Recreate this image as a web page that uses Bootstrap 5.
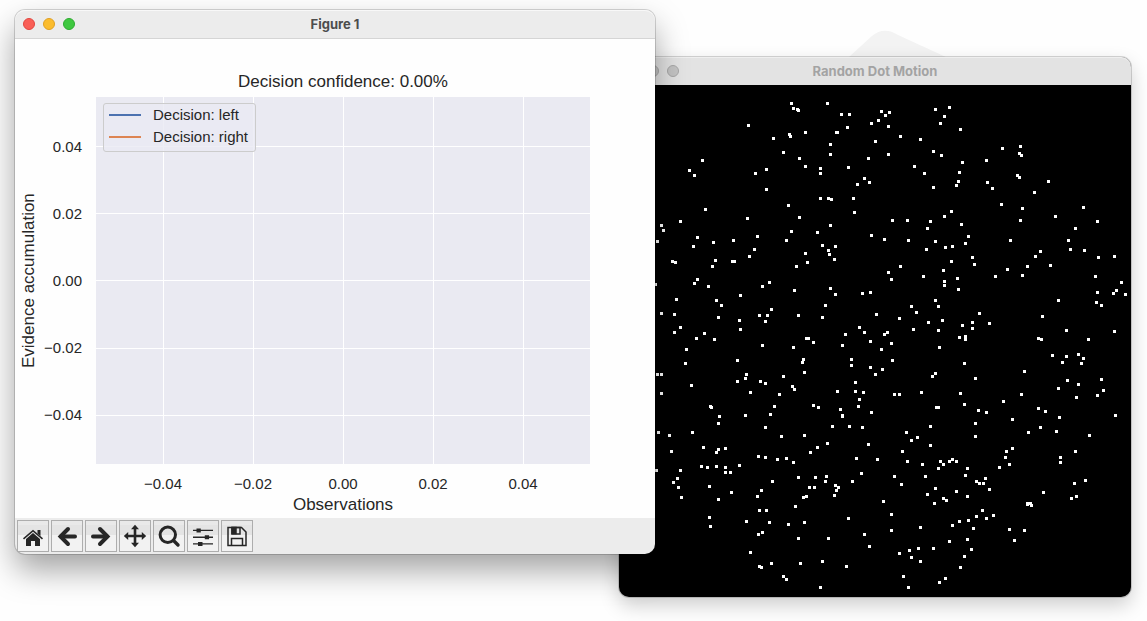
<!DOCTYPE html>
<html lang="en">
<head>
<meta charset="utf-8">
<meta name="viewport" content="width=device-width, initial-scale=1">
<title>Random Dot Motion</title>
<link href="https://cdn.jsdelivr.net/npm/bootstrap@5.3.0/dist/css/bootstrap.min.css" rel="stylesheet">
<style>
  body { background: #fefefe; font-family: "Liberation Sans", Arial, sans-serif; color: #262626; }
  .desktop { min-height: 100vh; }
  .app-window { position: absolute; border-radius: 10px; }
  .figure-window { left: 15px; top: 10px; width: 640px; z-index: 2; background: #ececec;
    box-shadow: 0 0 0 1px rgba(0,0,0,.16), 0 16px 32px rgba(0,0,0,.36); }
  .motion-window { left: 619px; top: 57px; width: 512px; z-index: 1; background: #000;
    box-shadow: 0 0 0 1px rgba(0,0,0,.16), 0 8px 20px rgba(0,0,0,.2); }
  .peak { position: absolute; left: 846px; top: 29px; }
  .title-bar { height: 29px; background: #ececec; border-bottom: 1px solid #d5d5d5; border-radius: 10px 10px 0 0;
    padding: 0 8px; display: grid; grid-template-columns: 1fr auto 1fr; align-items: center;
    box-shadow: inset 0 1px 0 #f8f8f8; }
  .title-bar h1 { font: 700 13px/16px Inter, sans-serif; margin: 0; color: #4d4d4d; }
  .motion-window .title-bar { height: 28px; background: #e3e3e3; border-bottom: 0; box-shadow: inset 0 1px 0 #efefef; }
  .motion-window h1 { color: #a3a3a3; }
  .light { width: 12px; height: 12px; border: 1px solid; border-radius: 50%; padding: 0; }
  .light-close { background: #f95f57; border-color: #e2463f; }
  .light-min { background: #fbbc2e; border-color: #e0a023; }
  .light-max { background: #3fc840; border-color: #2eab30; }
  .light-off { background: #c4c4c4; border-color: #a8a8a8; }
  .figure-body { background: #fefefe; padding: 32px 65px 3px 4px; display: grid;
    grid-template-columns: 20px 57px 1fr; grid-template-rows: 26px 367px auto auto; }
  .fig-label { font-size: 17px; line-height: 21px; text-align: center; }
  .y-title { writing-mode: vertical-rl; transform: rotate(180deg); line-height: 20px; }
  .ticks { font-size: 15px; line-height: 20px; }
  .y-ticks { padding: 16px 14px 16px 0; }
  .y-ticks span, .x-ticks span { flex: 1 1 0; }
  .x-ticks { padding: 10px 22px 0; text-align: center; }
  .axes { background: #eaeaf2; position: relative; }
  .gridlines { width: 100%; height: 100%; }
  .legend-box { position: absolute; left: 7px; top: 6px; border: 1px solid #ccc; border-radius: 3px;
    background: rgba(234,234,242,.8); padding: 0 7px 3px 5px; font-size: 15px; line-height: 22px; }
  .legend-line { width: 32px; height: 2px; margin-right: 12px; }
  .line-left { background: #4c72b0; }
  .line-right { background: #dd8452; }
  .tool-bar { padding: 2px; gap: 2px; border-radius: 0 0 10px 10px; }
  .tool { width: 32px; height: 32px; padding: 0; border: 1px solid #adadad; color: #262626;
    background: linear-gradient(#e9e9e9 0 4px, #e4e4e4 4px 14px, #f2f2f2 14px); }
  .tool svg { display: block; margin: auto; }
  .dot-field { display: block; width: 100%; height: auto; border-radius: 0 0 10px 10px; }
</style>
</head>
<body>
<main class="desktop position-relative overflow-hidden">
  <svg class="peak" width="100" height="28" aria-hidden="true"><path d="M3 28L26 7Q38-3 52 6L100 28Z" fill="#f3f3f3"/></svg>

  <section class="app-window motion-window" aria-label="Random Dot Motion">
    <header class="title-bar">
      <div class="d-flex gap-2">
        <button class="light light-off" aria-label="Close"></button>
        <button class="light light-off" aria-label="Minimise"></button>
        <button class="light light-off" aria-label="Zoom"></button>
      </div>
      <h1>Random Dot Motion</h1>
    </header>
    <svg class="dot-field" viewBox="0 0 512 512" shape-rendering="crispEdges" role="img" aria-label="Moving dots"><path id="dots" fill="#fff"/></svg>
  </section>

  <section class="app-window figure-window" aria-label="Figure 1">
    <header class="title-bar">
      <div class="d-flex gap-2">
        <button class="light light-close" aria-label="Close"></button>
        <button class="light light-min" aria-label="Minimise"></button>
        <button class="light light-max" aria-label="Zoom"></button>
      </div>
      <h1>Figure 1</h1>
    </header>
    <div class="figure-body">
      <div></div><div></div>
      <div class="fig-label">Decision confidence: 0.00%</div>
      <div class="fig-label y-title">Evidence accumulation</div>
      <div class="ticks y-ticks d-flex flex-column text-end">
        <span class="d-flex align-items-center justify-content-end">0.04</span>
        <span class="d-flex align-items-center justify-content-end">0.02</span>
        <span class="d-flex align-items-center justify-content-end">0.00</span>
        <span class="d-flex align-items-center justify-content-end">−0.02</span>
        <span class="d-flex align-items-center justify-content-end">−0.04</span>
      </div>
      <div class="axes">
        <svg class="gridlines d-block" viewBox="0 0 494 367" preserveAspectRatio="none" shape-rendering="crispEdges" aria-hidden="true">
          <path fill="#fff" d="M67 0h1v367h-1zM157 0h1v367h-1zM247 0h1v367h-1zM337 0h1v367h-1zM427 0h1v367h-1zM0 49h494v1H0zM0 116h494v1H0zM0 183h494v1H0zM0 251h494v1H0zM0 318h494v1H0z"/>
        </svg>
        <div class="legend-box">
          <div class="d-flex align-items-center"><span class="legend-line line-left"></span>Decision: left</div>
          <div class="d-flex align-items-center"><span class="legend-line line-right"></span>Decision: right</div>
        </div>
      </div>
      <div></div><div></div>
      <div class="ticks x-ticks d-flex"><span>−0.04</span><span>−0.02</span><span>0.00</span><span>0.02</span><span>0.04</span></div>
      <div></div><div></div>
      <div class="fig-label">Observations</div>
    </div>
    <div class="tool-bar d-flex" role="toolbar" aria-label="Figure tools">
      <button class="tool" aria-label="Home"><svg width="24" height="24" viewBox="0 0 24 24" fill="currentColor"><path d="M12 9l7 6v7h-5v-5h-4v5H5v-7z"/><path d="M2.500 14.800L12 6.700l9.500 8.100" fill="none" stroke="currentColor" stroke-width="1.600"/><path d="M16.500 6h3v6l-3-2.600z"/></svg></button>
      <button class="tool" aria-label="Back"><svg width="24" height="24" viewBox="0 0 24 24" fill="none" stroke="currentColor" stroke-width="4"><path d="M20 12.500H6" stroke-linecap="round"/><path d="M13 5l-7.500 7.500L13 20" stroke-linecap="round"/></svg></button>
      <button class="tool" aria-label="Forward"><svg width="24" height="24" viewBox="0 0 24 24" fill="none" stroke="currentColor" stroke-width="4"><path d="M4 12.500h14" stroke-linecap="round"/><path d="M11 5l7.500 7.500L11 20" stroke-linecap="round"/></svg></button>
      <button class="tool" aria-label="Pan"><svg width="24" height="24" viewBox="0 0 24 24" fill="currentColor"><path d="M12 .8l4 4.400h-2.700v5.500h5.500V8l4.400 4-4.400 4v-2.700h-5.500v5.500H16l-4 4.400-4-4.400h2.700v-5.500H5.200V16L.8 12l4.400-4v2.700h5.500V5.200H8z"/></svg></button>
      <button class="tool" aria-label="Zoom to rectangle"><svg width="24" height="24" viewBox="0 0 24 24" fill="none" stroke="currentColor"><circle cx="10.800" cy="10.800" r="7.700" stroke-width="3"/><path d="M16.500 16.500l4.500 4.500" stroke-width="3.400" stroke-linecap="round"/></svg></button>
      <button class="tool" aria-label="Configure subplots"><svg width="24" height="24" viewBox="0 0 24 24" fill="currentColor"><path d="M2 5.800h20v1.300H2zM2 12.600h20v1.300H2zM2 19.300h20v1.300H2zM5.500 4.500h4.300v4H5.500zM13.800 11.200h4.300v4h-4.300zM7 18h4.500v4H7z"/></svg></button>
      <button class="tool" aria-label="Save"><svg width="24" height="24" viewBox="0 0 24 24" fill="none" stroke="currentColor" stroke-width="1.500"><path d="M3 3.500h13.500L21 8v13.500H3z"/><path d="M6.500 21.500v-7h11v7"/><path d="M7 3.500h8V10H7z"/><path d="M7 3.500h4v6H7z" fill="currentColor"/></svg></button>
    </div>
  </section>
</main>
<script src="https://cdn.jsdelivr.net/npm/bootstrap@5.3.0/dist/js/bootstrap.bundle.min.js"></script>
<script>
  // Dots by tile: [tile x, tile y, dot centres in thirds of a pixel]; each dot is a 3px square.
  const tiles = [
    [31, 0, "424,55 430,70 442,73 445,76 532,55 574,88 598,88 694,79 706,91 718,82 685,106 664,115 715,124 295,121 592,127 466,142 559,142 562,142 418,148 421,154 370,160 541,178 676,169 400,202 541,208 715,208 448,220 655,220 157,226 466,244 595,247 511,250 511,265 349,253 316,265 118,256 133,271 643,280 658,292 622,298 349,313 511,340 535,340 544,343 610,340 415,361 166,373 613,382 448,397 292,400 91,409 34,421 40,436 541,421 424,439 502,442 664,451 703,463 322,454 142,457 250,466 409,466 190,472 22,469 130,484 313,493 517,481 556,484 535,496 466,505 538,508"],
    [271, 0, "136,73 178,67 163,94 151,115 211,133 31,154 91,163 130,199 154,211 391,184 388,205 394,211 337,190 289,226 217,232 73,244 103,265 208,262 205,289 199,301 130,307 292,292 307,310 382,271 388,277 475,289 433,322 334,358 397,370 391,406 496,394 580,367 622,409 556,430 184,379 163,394 121,409 112,430 214,418 7,406 52,406 55,466 136,469 235,454 226,475 166,487 187,484 109,493 361,466 535,466 541,493 583,496 451,499"],
    [31, 170, "298,4 67,19 76,22 196,16 187,34 247,19 253,19 472,22 439,34 553,13 715,52 142,73 133,85 16,88 175,94 358,82 337,94 433,106 541,100 556,118 637,115 661,112 271,121 79,133 199,136 214,151 526,151 364,163 34,175 73,178 205,187 328,181 352,181 346,199 445,181 517,187 268,196 679,178 91,217 73,232 163,235 139,250 193,253 271,223 628,217 643,232 586,238 703,238 712,232 469,250 475,250 490,262 661,259 577,271 337,271 430,277 694,283 109,283 106,325 262,316 460,313 457,322 604,313 604,331 661,337 697,343 676,358 463,352 22,358 34,358 289,358 286,370 400,364 262,379 331,379 346,385 616,382 124,391 427,394 433,403 562,409 616,409 640,412 301,412 388,418 34,415 628,433 181,454 184,457 373,454 490,451 505,457 571,463 625,454 664,472 361,478 286,481 208,484 577,481 577,484 205,505"],
    [271, 170, "247,7 184,19 253,28 31,34 160,46 100,64 4,73 163,79 163,91 202,70 205,103 136,136 145,154 64,154 79,172 28,190 115,202 157,196 70,223 145,226 217,211 247,202 247,220 268,175 298,205 208,247 226,244 226,253 4,265 148,277 7,316 223,325 136,355 127,364 256,370 94,412 13,418 28,418 211,415 139,457 145,457 223,448 265,466 289,472 256,505 340,439 367,493 394,418 403,349 436,4 412,34 397,61 352,43 316,64 481,31 625,7 673,4 616,64 694,82 622,112 679,106 670,115 706,118 619,142 634,151 505,136 457,184 529,226 445,250 454,253 595,253 673,229 487,301 529,304 517,322 565,298 580,310 574,325 532,376 505,400 565,388 559,427 634,373 640,406 622,421 445,460 466,469 508,487 676,481"],
    [31, 340, "346,7 547,4 598,4 637,7 25,22 58,31 127,22 394,34 463,31 532,55 502,67 655,58 160,67 64,79 205,73 226,70 199,82 481,82 325,94 346,97 382,103 409,100 430,112 619,100 682,103 154,124 172,127 199,124 226,127 268,121 226,142 241,142 19,136 91,136 634,145 82,160 70,172 85,187 445,157 496,157 529,154 526,169 367,169 607,169 178,184 478,187 493,187 556,181 565,187 559,196 553,211 334,196 244,202 322,214 94,217 205,223 460,217 469,214 700,229 436,244 328,256 349,256 178,277 595,280 289,289 358,292 463,292 415,298 181,304 337,322 325,328 643,328 445,340 535,340 658,364 301,382 364,415 451,415 517,409 328,424 334,427 589,424 400,454 409,463 511,487"],
    [271, 340, "121,4 49,22 82,37 64,46 121,61 256,34 415,22 451,7 499,19 598,31 367,70 349,79 346,97 358,118 328,127 37,79 556,79 511,97 511,112 52,109 97,118 151,109 160,118 145,130 178,109 187,103 199,109 232,130 226,151 13,154 106,154 34,178 136,190 112,208 199,199 232,214 160,220 169,226 133,235 259,169 268,175 280,175 286,160 298,193 586,166 553,175 460,202 559,214 544,220 412,235 412,238 421,235 424,241 277,256 4,268 259,274 289,280 310,271 208,289 235,286 187,301 250,310 91,307 4,316 358,313 403,316 373,346 232,343 178,349 244,373 85,370 130,370 58,376 28,385 64,397 91,409 223,394 211,427 40,454 55,487 166,460 148,472"]
  ];
  let d = "";
  for (const [ox, oy, list] of tiles)
    for (const dot of list.split(" ")) {
      const [x, y] = dot.split(",").map(v => Math.floor(v / 3) - 1);
      d += `M${ox + x} ${oy + y}h3v3h-3z`;
    }
  document.getElementById("dots").setAttribute("d", d);
</script>
</body>
</html>
